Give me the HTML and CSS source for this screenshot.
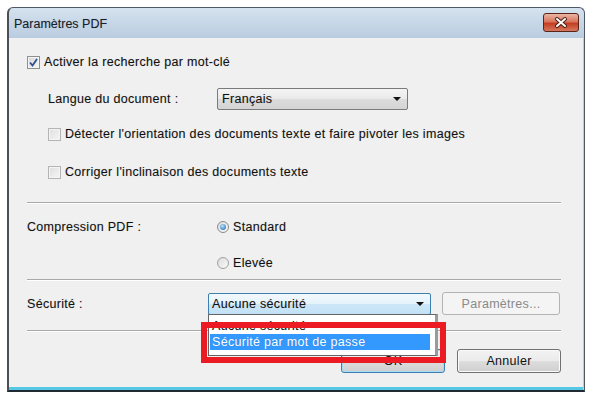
FILE: index.html
```html
<!DOCTYPE html>
<html lang="fr">
<head>
    <meta charset="UTF-8">
    <title>Paramètres PDF</title>
    <link rel="stylesheet" href="styles.css">
</head>
<body>

<div class="window">
    <!-- Title bar -->
    <div class="titlebar">
        <span class="title">Paramètres PDF</span>
        <span class="close">
            <svg width="36" height="19" viewBox="0 0 36 19">
                <path d="M14 6 L22 13 M22 6 L14 13" stroke="#4a1e14" stroke-width="4" stroke-linecap="round"/>
                <path d="M14 6 L22 13 M22 6 L14 13" stroke="#ffffff" stroke-width="2" stroke-linecap="round"/>
            </svg>
        </span>
    </div>

    <div class="client">
        <div class="row">
            <span class="check">
                <svg width="11" height="11" viewBox="0 0 11 11"><path d="M2 5.5 L4.5 8.5 L9 2" fill="none" stroke="#2c4f8e" stroke-width="1.8"/></svg>
            </span>
            <span>Activer la recherche par mot-clé</span>
        </div>

        <div class="row row-lang indent">
            <span class="lang-label">Langue du document :</span>
            <div class="combo combo-lang">Français<span class="arrow"></span></div>
        </div>

        <div class="row row-orient indent">
            <span class="check check-cb"></span>
            <span>Détecter l'orientation des documents texte et faire pivoter les images</span>
        </div>

        <div class="row row-skew indent">
            <span class="check check-cb"></span>
            <span>Corriger l'inclinaison des documents texte</span>
        </div>

        <div class="sep sep-first"></div>

        <div class="row row-comp">
            <span class="comp-label">Compression PDF :</span>
            <span class="radio radio-on"><span class="dot"></span></span>
            <span>Standard</span>
        </div>

        <div class="row row-high">
            <span class="radio"></span>
            <span>Elevée</span>
        </div>

        <div class="sep sep-second"></div>

        <div class="row row-sec">
            <span class="sec-label">Sécurité :</span>
            <div class="combo combo-sec">Aucune sécurité<span class="arrow"></span></div>
            <button class="btn btn-params" disabled>Paramètres...</button>
        </div>

        <div class="sep sep-third"></div>

        <div class="row row-actions">
            <button class="btn btn-default">OK</button>
            <button class="btn">Annuler</button>
        </div>

        <!-- open dropdown of the security combo -->
        <ul class="droplist">
            <li>Aucune sécurité</li>
            <li class="picked">Sécurité par mot de passe</li>
        </ul>

        <!-- red highlight frame -->
        <div class="callout"></div>
    </div>
</div>

</body>
</html>
```

FILE: styles.css
```css
body {
    margin: 0;
    background: #fff;
    font-family: "Liberation Sans", Arial, sans-serif;
    font-size: 12.5px;
    letter-spacing: 0.3px;
    color: #111;
    text-shadow: 0 0 1px rgba(0, 0, 0, 0.2);
}

/* Window frame */
.window {
    margin: 7px 0 0 7px;
    width: 575px;
    border: 1px solid #4d5a66;
    border-left: 2px solid #4a4f55;
    border-bottom: 2px solid #1f2a33;
    border-radius: 6px 6px 0 0;
    background: linear-gradient(#d5e2ef, #b9cce0 30px, #b9cce0);
}

.titlebar {
    height: 30px;
    display: flex;
    justify-content: space-between;
    padding: 0 5px 0 5px;
}

.title {
    align-self: center;
    color: #17202b;
    margin-top: 1px;
    letter-spacing: 0;
}

.close {
    margin-top: 5px;
    width: 36px;
    height: 19px;
    box-sizing: border-box;
    border: 1px solid #5a2418;
    border-radius: 3px;
    background: linear-gradient(#eab4a4, #d9775e 45%, #c43e22 55%, #d5785c);
}

.close svg {
    display: block;
    margin: -1px 0 0 -1px;
}

/* Client area */
.client {
    position: relative;
    height: 352px;
    box-sizing: border-box;
    margin-right: 1px;
    padding: 14px 22px 0 18px;
    background: #f0f0f0;
    border-bottom: 3px solid #55c8e6;
}

.row {
    display: flex;
    align-items: center;
    height: 20px;
    white-space: nowrap;
}

.indent { padding-left: 21px; }

.row-lang { height: 22px; margin-top: 16px; }
.row-orient { margin-top: 14px; }
.row-skew { margin-top: 18px; }
.row-comp { margin-top: 13px; }
.row-high { margin-top: 16px; padding-left: 190px; }
.row-sec { height: 23px; margin-top: 11px; }
.row-actions { height: 24px; margin-top: 17px; justify-content: flex-end; gap: 12px; }

.lang-label { width: 169px; }
.comp-label { width: 190px; }
.sec-label { width: 181px; }

/* Separators */
.sep {
    height: 0;
    border-top: 1px solid #a9a9a9;
    border-bottom: 1px solid #fff;
}

.sep-first { margin-top: 20px; }
.sep-second { margin-top: 6px; }
.sep-third { margin-top: 15px; }

/* Checkboxes and radios */
.check {
    flex: none;
    width: 13px;
    height: 13px;
    box-sizing: border-box;
    margin-right: 4px;
    border: 1px solid #8e8f8f;
    background: linear-gradient(135deg, #d6d6d6, #f7f7f7);
    box-shadow: inset 0 0 0 1px #f4f4f4;
    display: flex;
    align-items: center;
    justify-content: center;
}

.check-cb {
    border-color: #b4b4b4;
    background: linear-gradient(135deg, #dedede, #f6f6f6);
}

.radio {
    flex: none;
    width: 12px;
    height: 12px;
    box-sizing: border-box;
    margin-right: 4px;
    border: 1px solid #a0a0a0;
    border-radius: 50%;
    background: linear-gradient(135deg, #dcdcdc, #fafafa);
    display: flex;
    align-items: center;
    justify-content: center;
}

.radio-on { border-color: #8a8a8a; }

.dot {
    width: 6px;
    height: 6px;
    border-radius: 50%;
    background: radial-gradient(circle at 40% 35%, #bfe3fa, #3d8ac7 70%, #22598f);
}

/* Combos */
.combo {
    flex: none;
    height: 22px;
    box-sizing: border-box;
    display: flex;
    align-items: center;
    justify-content: space-between;
    padding: 0 6px 0 4px;
    border: 1px solid #7a7a7a;
    border-radius: 2px;
    background: linear-gradient(#f4f4f4, #e9e9e9 50%, #dcdcdc 51%, #d4d4d4);
}

.combo-lang { width: 191px; }

.combo-sec {
    width: 223px;
    padding-left: 3px;
    border-color: #3c7fb1;
    background: linear-gradient(#f3f9fd, #e4f2fb 50%, #cde7f8 51%, #c2e1f6);
}

.arrow {
    width: 0;
    height: 0;
    border-left: 4px solid transparent;
    border-right: 4px solid transparent;
    border-top: 4px solid #111;
}

/* Buttons */
.btn {
    flex: none;
    width: 104px;
    height: 24px;
    padding: 0;
    font-family: inherit;
    font-size: 12.5px;
    letter-spacing: 0.3px;
    color: #111;
    border: 1px solid #707070;
    border-radius: 3px;
    background: linear-gradient(#f2f2f2, #ebebeb 50%, #dddddd 51%, #cfcfcf);
    box-shadow: inset 0 0 0 1px #fbfbfb;
}

.btn-default {
    border-color: #3c7fb1;
    box-shadow: inset 0 0 0 1px #a8dcf6;
}

.btn-params {
    width: 118px;
    height: 23px;
    margin-left: 11px;
    color: #8a8a8a;
    border-color: #b0b4b7;
    background: #f4f4f4;
    box-shadow: none;
}

/* Dropdown list */
.droplist {
    position: absolute;
    left: 199px;
    top: 276px;
    width: 230px;
    height: 42px;
    box-sizing: border-box;
    margin: 0;
    padding: 3px 5px 0 1px;
    list-style: none;
    background: #fff;
    border: 1px solid #646464;
    border-right: 3px solid #9a9a9a;
}

.droplist li {
    height: 16px;
    line-height: 16px;
    padding-left: 2px;
}

.droplist .picked {
    background: #3399ff;
    color: #fff;
}

.callout {
    position: absolute;
    left: 192px;
    top: 284px;
    width: 245px;
    height: 41px;
    box-sizing: border-box;
    border: 6px solid #ec1b23;
}
```
